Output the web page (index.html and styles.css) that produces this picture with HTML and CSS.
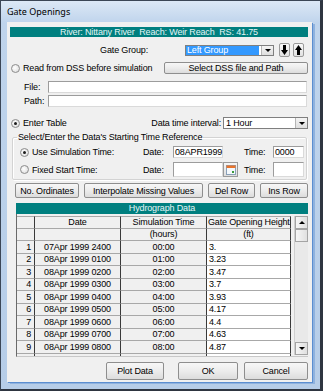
FILE: index.html
```html
<!DOCTYPE html>
<html lang="en">
  <head>
    <meta charset="UTF-8" />
    <title>Gate Openings</title>
    <link rel="stylesheet" href="styles.css">
  </head>
  <body>
    <div class="window">
      <div class="titlebar">Gate Openings</div>
      <div class="client">
        <div class="banner">River: Nittany River&nbsp;&nbsp;Reach: Weir Reach&nbsp;&nbsp;RS: 41.75</div>

        <div class="row gate-row">
          <span class="gate-label">Gate Group:</span>
          <div class="combo combo-sel">
            <span class="combo-text">Left Group</span>
            <span class="combo-btn"><i class="tri-down"></i></span>
          </div>
          <button class="arrow-btn down-btn">
            <svg width="7" height="10" viewBox="0 0 7 10"><path d="M2 0h3v5h2L3.5 10 0 5h2z" fill="#000"/></svg>
          </button>
          <button class="arrow-btn up-btn">
            <svg width="7" height="10" viewBox="0 0 7 10"><path d="M2 10h3V5h2L3.5 0 0 5h2z" fill="#000"/></svg>
          </button>
        </div>

        <div class="row dss-row">
          <span class="radio"></span>
          <span class="radio-label">Read from DSS before simulation</span>
          <button class="btn dss-btn">Select DSS file and Path</button>
        </div>

        <div class="row field-row file-row">
          <span class="field-label">File:</span>
          <span class="input"></span>
        </div>
        <div class="row field-row path-row">
          <span class="field-label">Path:</span>
          <span class="input"></span>
        </div>

        <div class="row table-row">
          <span class="radio checked"></span>
          <span class="radio-label">Enter Table</span>
          <span class="interval-label">Data time interval:</span>
          <div class="combo combo-interval">
            <span class="combo-text">1 Hour</span>
            <span class="combo-btn"><i class="tri-down"></i></span>
          </div>
        </div>

        <fieldset class="group">
          <legend>Select/Enter the Data's Starting Time Reference</legend>
          <div class="time-row sim-row">
            <span class="radio checked"></span>
            <span class="time-label">Use Simulation Time:</span>
            <span class="date-label">Date:</span>
            <span class="input date-input">08APR1999</span>
            <span class="cal-space"></span>
            <span class="tlabel">Time:</span>
            <span class="input time-input">0000</span>
          </div>
          <div class="time-row fixed-row">
            <span class="radio"></span>
            <span class="time-label">Fixed Start Time:</span>
            <span class="date-label">Date:</span>
            <span class="input date-input"></span>
            <button class="cal-btn">
              <svg width="10" height="10" viewBox="0 0 10 10">
                <rect x="0.5" y="0.5" width="9" height="9" fill="#f4f8fc" stroke="#8aa0b8"/>
                <rect x="0.5" y="0.5" width="9" height="2.5" fill="#e8742c"/>
                <rect x="6" y="6" width="2" height="2" fill="#3a9a3a"/>
              </svg>
            </button>
            <span class="tlabel">Time:</span>
            <span class="input time-input"></span>
          </div>
        </fieldset>

        <div class="row tool-row">
          <button class="btn b-ord">No. Ordinates</button>
          <button class="btn b-interp">Interpolate Missing Values</button>
          <button class="btn b-del">Del Row</button>
          <button class="btn b-ins">Ins Row</button>
        </div>

        <div class="banner banner-data">Hydrograph Data</div>

        <div class="grid-box">
          <table class="grid">
            <colgroup>
              <col class="c-num"><col class="c-date"><col class="c-sim"><col class="c-gate">
            </colgroup>
            <thead>
              <tr><th></th><th>Date</th><th>Simulation Time</th><th>Gate Opening Height</th></tr>
              <tr><th></th><th></th><th>(hours)</th><th>(ft)</th></tr>
            </thead>
            <tbody>
              <tr><td class="num">1</td><td>07Apr 1999 2400</td><td>00:00</td><td class="val">3.</td></tr>
              <tr><td class="num">2</td><td>08Apr 1999 0100</td><td>01:00</td><td class="val">3.23</td></tr>
              <tr><td class="num">3</td><td>08Apr 1999 0200</td><td>02:00</td><td class="val">3.47</td></tr>
              <tr><td class="num">4</td><td>08Apr 1999 0300</td><td>03:00</td><td class="val">3.7</td></tr>
              <tr><td class="num">5</td><td>08Apr 1999 0400</td><td>04:00</td><td class="val">3.93</td></tr>
              <tr><td class="num">6</td><td>08Apr 1999 0500</td><td>05:00</td><td class="val">4.17</td></tr>
              <tr><td class="num">7</td><td>08Apr 1999 0600</td><td>06:00</td><td class="val">4.4</td></tr>
              <tr><td class="num">8</td><td>08Apr 1999 0700</td><td>07:00</td><td class="val">4.63</td></tr>
              <tr><td class="num">9</td><td>08Apr 1999 0800</td><td>08:00</td><td class="val">4.87</td></tr>
              <tr class="cut"><td class="num"></td><td></td><td></td><td class="val"></td></tr>
            </tbody>
          </table>
          <div class="vscroll">
            <span class="sb-btn"><i class="tri-up"></i></span>
            <span class="sb-thumb"></span>
            <span class="sb-track"></span>
            <span class="sb-btn"><i class="tri-down"></i></span>
          </div>
        </div>

        <div class="row bottom-row">
          <button class="btn b-plot">Plot Data</button>
          <button class="btn b-ok">OK</button>
          <button class="btn b-cancel">Cancel</button>
        </div>
      </div>
    </div>
  </body>
</html>
```

FILE: styles.css
```css
body {
  margin: 0;
  font-family: "Liberation Sans", Arial, sans-serif;
  font-size: 9px;
  letter-spacing: -0.15px;
  color: #000;
}
.window {
  width: 323px;
  height: 391px;
  box-sizing: border-box;
  border: 1px solid #3b4656;
  border-right: 3px solid #2e3540;
  border-bottom: 2px solid #2e3540;
  background: linear-gradient(#dce8f6, #bfd4ec 22px, #b6cde8);
  padding: 0 8px 7px 6px;
  display: flex;
  flex-direction: column;
}
.titlebar {
  height: 21px;
  line-height: 22px;
  font-family: "Noto Sans", sans-serif;
  font-size: 9px;
  letter-spacing: 0;
}
.client {
  flex: 1;
  background: #f0f0f0;
  box-shadow: 1px 1px 0 #5b8ed0, 3px 2px 0 #8fb2de;
  display: flex;
  flex-direction: column;
  overflow: hidden;
}
.banner {
  margin: 5px 4px 0 3px;
  height: 10px;
  line-height: 10px;
  background: #007f7f;
  color: #e4f6f6;
  text-align: center;
  white-space: nowrap;
}
.row {
  display: flex;
  align-items: center;
  white-space: nowrap;
}
.gate-row {
  margin-top: 6px;
  height: 14px;
}
.gate-label {
  width: 141px;
  text-align: right;
}
.combo {
  box-sizing: border-box;
  display: flex;
  align-items: stretch;
  border: 1px solid #7f7f7f;
  background: #fff;
  height: 11px;
}
.combo-text {
  flex: 1;
  line-height: 9px;
  padding-left: 1px;
}
.combo-sel {
  margin-left: 37px;
  width: 89px;
}
.combo-sel .combo-text {
  background: #3399ff;
  color: #fff;
  margin: 0 2px 0 0;
}
.combo-btn {
  width: 11px;
  background: linear-gradient(#f4f4f4, #dedede);
  border-left: 1px solid #b5b5b5;
  display: flex;
  align-items: center;
  justify-content: center;
}
.tri-down {
  width: 0;
  height: 0;
  border-left: 3px solid transparent;
  border-right: 3px solid transparent;
  border-top: 3px solid #000;
}
.tri-up {
  width: 0;
  height: 0;
  border-left: 3px solid transparent;
  border-right: 3px solid transparent;
  border-bottom: 3px solid #000;
}
.arrow-btn {
  box-sizing: border-box;
  width: 11px;
  height: 14px;
  padding: 0;
  border: 1px solid #9a9a9a;
  border-radius: 2px;
  background: linear-gradient(#f8f8f8, #e2e2e2);
  display: flex;
  align-items: center;
  justify-content: center;
}
.down-btn {
  margin-left: 5px;
}
.up-btn {
  margin-left: 3px;
}
.dss-row {
  margin-top: 4px;
  height: 14px;
}
.radio {
  box-sizing: border-box;
  width: 9px;
  height: 9px;
  border-radius: 50%;
  border: 1px solid #8c8c8c;
  background: radial-gradient(circle at 40% 40%, #ffffff, #d8d8d8);
  margin-left: 4px;
  display: flex;
  align-items: center;
  justify-content: center;
  flex: none;
}
.radio.checked::after {
  content: "";
  width: 3px;
  height: 3px;
  border-radius: 50%;
  background: #1c1c1c;
}
.radio-label {
  margin-left: 3px;
}
.btn {
  box-sizing: border-box;
  font: inherit;
  letter-spacing: inherit;
  padding: 0;
  border: 1px solid #8e8e8e;
  border-radius: 2px;
  background: linear-gradient(#f7f7f7, #ececec 50%, #dcdcdc);
  color: #000;
  white-space: nowrap;
}
.dss-btn {
  margin-left: auto;
  margin-right: 4px;
  width: 144px;
  height: 12px;
  line-height: 10px;
}
.field-row {
  height: 12px;
}
.file-row {
  margin-top: 6px;
}
.path-row {
  margin-top: 2px;
}
.field-label {
  width: 24px;
  padding-left: 17px;
  flex: none;
}
.input {
  box-sizing: border-box;
  display: block;
  background: #fff;
  border: 1px solid;
  border-color: #9c9c9c #dadada #dadada #9c9c9c;
  height: 100%;
  line-height: 10px;
  padding-left: 1px;
}
.field-row .input {
  flex: 1;
  margin-right: 5px;
}
.table-row {
  margin-top: 10px;
  height: 12px;
}
.interval-label {
  margin-left: auto;
}
.combo-interval {
  margin-left: 2px;
  margin-right: 4px;
  width: 85px;
  height: 12px;
}
.combo-interval .combo-text {
  line-height: 10px;
  padding-left: 2px;
}
.group {
  margin: 3px 5px 0 5px;
  padding: 0 0 2px 0;
  border: 1px solid #d3d3d3;
  border-radius: 2px;
  box-shadow: inset 1px 1px 0 #fff, 1px 1px 0 #fff;
}
.group legend {
  margin-left: 4px;
  padding: 0 1px;
  line-height: 10px;
}
.time-row {
  display: flex;
  align-items: center;
  white-space: nowrap;
}
.sim-row {
  margin-top: 4px;
  height: 12px;
}
.fixed-row {
  margin-top: 4px;
  height: 15px;
}
.time-row .radio {
  margin-left: 7px;
}
.time-label {
  margin-left: 3px;
  width: 111px;
}
.date-label {
  width: 30px;
}
.date-input {
  width: 50px;
}
.cal-space {
  width: 21px;
}
.cal-btn {
  box-sizing: border-box;
  width: 15px;
  height: 15px;
  margin-right: 6px;
  padding: 0;
  border: 1px solid #9a9a9a;
  background: linear-gradient(#f6f6f6, #dedede);
  display: flex;
  align-items: center;
  justify-content: center;
}
.tlabel {
  width: 29px;
}
.time-input {
  width: 31px;
}
.tool-row {
  margin-top: 3px;
  height: 15px;
  padding-left: 8px;
  gap: 5px;
}
.tool-row .btn {
  height: 15px;
}
.b-ord {
  width: 64px;
}
.b-interp {
  width: 119px;
}
.b-del {
  width: 47px;
}
.b-ins {
  width: 48px;
}
.banner-data {
  margin: 5px 0 0 9px;
  width: 292px;
  height: 11px;
  line-height: 11px;
}
.grid-box {
  margin-left: 9px;
  width: 292px;
  height: 143px;
  display: flex;
  align-items: flex-start;
  overflow: hidden;
  border-left: 1px solid #6a6a6a;
  border-bottom: 1px solid #c8c8c8;
  box-sizing: border-box;
}
.grid {
  margin-top: 2px;
  border-collapse: separate;
  border-spacing: 0;
  table-layout: fixed;
  width: 274px;
}
.c-num {
  width: 18px;
}
.c-date {
  width: 86px;
}
.c-sim {
  width: 86px;
}
.c-gate {
  width: 84px;
}
.grid tr {
  height: 12.5px;
}
.grid th,
.grid td {
  box-sizing: border-box;
  height: 12.5px;
  padding: 0 1px;
  line-height: 10px;
  font-weight: normal;
  background: #f0f0f0;
  border-right: 1px solid #3a3a3a;
  border-bottom: 1px solid #a8a8a8;
  text-align: center;
  white-space: nowrap;
  overflow: hidden;
}
.grid thead tr:first-child th {
  border-top: 1px solid #a8a8a8;
}
.grid td.num {
  text-align: right;
  padding-right: 3px;
}
.grid td.val {
  background: #fff;
  text-align: left;
  padding-left: 2px;
}
.vscroll {
  margin: 2px 0 0 3px;
  width: 14px;
  height: 139px;
  display: flex;
  flex-direction: column;
  background: #e9e9e9;
  border-left: 1px solid #cfcfcf;
}
.sb-btn {
  box-sizing: border-box;
  height: 13px;
  border: 1px solid #a4a4a4;
  background: linear-gradient(90deg, #f6f6f6, #e0e0e0);
  display: flex;
  align-items: center;
  justify-content: center;
}
.sb-thumb {
  box-sizing: border-box;
  height: 13px;
  border: 1px solid #a4a4a4;
  background: linear-gradient(90deg, #f6f6f6, #e0e0e0);
}
.sb-track {
  flex: 1;
}
.bottom-row {
  margin-top: 5px;
  height: 18px;
}
.bottom-row .btn {
  height: 18px;
}
.b-plot {
  margin-left: 99px;
  width: 58px;
}
.b-ok {
  margin-left: 14px;
  width: 60px;
}
.b-cancel {
  margin-left: 6px;
  width: 64px;
}
```
